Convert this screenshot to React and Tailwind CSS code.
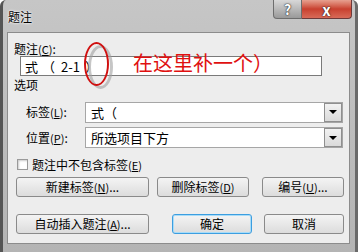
import React from "react";

const F = { fontFamily: '"Noto Sans CJK SC", "DejaVu Sans", sans-serif' };

function M({ k }) {
  return (
    <span className="text-[11px]">
      (<span className="underline">{k}</span>)
    </span>
  );
}

function Btn({ w, children, primary }) {
  return (
    <div
      className={`${w} h-[20px] flex items-center justify-center rounded-[3px] border text-[12px] text-black bg-gradient-to-b from-[#f4f4f4] to-[#dcdcdc] ${
        primary ? "border-[#3c9ee0] shadow-[inset_0_0_0_1px_#a8dcf8]" : "border-[#8a8a8a]"
      }`}
    >
      {children}
    </div>
  );
}

function Select({ text }) {
  return (
    <div className="w-[258px] h-[21px] bg-white border border-[#a6a6a6] flex items-center justify-between pl-[5px] pr-[0px]">
      <span className="text-[13px] leading-none">{text}</span>
      <div className="w-[18px] h-[19px] border border-[#8f8f8f] bg-gradient-to-b from-[#f2f2f2] to-[#dadada] flex items-center justify-center">
        <div className="w-0 h-0 border-l-[4px] border-r-[4px] border-t-[4px] border-l-transparent border-r-transparent border-t-black" />
      </div>
    </div>
  );
}

export default function App() {
  return (
    <div
      className="w-[358px] h-[252px] bg-gradient-to-b from-[#c6c6c6] via-[#bdbdbd] to-[#b4b4b4] relative overflow-hidden border-l-[3px] border-l-[#555] border-r-[3px] border-r-[#6a6a6a] rounded-t-[6px]"
      style={F}
    >
      {/* title bar */}
      <div className="h-[32px] flex items-start">
        <div className="pl-[5px] pt-[10px] text-[12px] leading-[14px] text-black [text-shadow:0_0_3px_#fff,0_0_2px_#fff]">
          题注
        </div>
        <div className="flex-1" />
        <div className="flex mr-[3px]">
          <div className="w-[29px] h-[19px] rounded-bl-[4px] border border-[#6d6d6d] border-t-0 bg-gradient-to-b from-[#d8d8d8] to-[#9a9a9a] flex items-center justify-center text-white font-bold text-[14px] leading-[17px] [text-shadow:0_0_2px_#333,0_0_1px_#000]">
            ?
          </div>
          <div className="w-[50px] h-[19px] rounded-br-[4px] border border-[#6d3a3a] border-t-0 border-l-0 bg-gradient-to-b from-[#e6a090] via-[#c8402f] to-[#d86a58] flex items-center justify-center text-white font-bold text-[15px] leading-[17px] [text-shadow:0_0_2px_#422,0_0_1px_#000]">
            x
          </div>
        </div>
      </div>

      {/* content panel */}
      <div className="relative ml-[4px] mr-[5px] h-[212px] bg-[#ededed] border border-[#8c8c8c] pt-[9px] text-black">
        <div className="h-[14px] ml-[6px] text-[12px] leading-[14px]">
          题注<M k="C" />:
        </div>
        <div className="ml-[12px] w-[302px] h-[20px] bg-white border border-[#7a7a7a] flex items-center pl-[4px] text-[13px] leading-none">
          <span>式</span>
          <span className="ml-[4px]">（</span>
          <span className="ml-[6px]">2-1</span>
          <span className="ml-[5px]">）</span>
        </div>
        <div className="h-[14px] mt-[2px] ml-[6px] text-[12px] leading-[14px]">选项</div>
        <div className="mt-[10px] flex items-center h-[20px]">
          <div className="ml-[18px] w-[59px] text-[12px] leading-[14px]">
            标签<M k="L" />:
          </div>
          <Select text="式（" />
        </div>
        <div className="mt-[5px] flex items-center h-[21px]">
          <div className="ml-[18px] w-[59px] text-[12px] leading-[14px]">
            位置<M k="P" />:
          </div>
          <Select text="所选项目下方" />
        </div>
        <div className="mt-[10px] flex items-center h-[13px] ml-[9px]">
          <div className="w-[11px] h-[11px] bg-white border border-[#9a9a9a] shadow-[inset_1px_1px_2px_#ccc]" />
          <span className="ml-[4px] text-[12px] leading-[14px]">
            题注中不包含标签<M k="E" />
          </span>
        </div>
        <div className="mt-[6px] flex ml-[8px]">
          <Btn w="w-[133px]">
            新建标签<M k="N" />...
          </Btn>
          <div className="w-[8px]" />
          <Btn w="w-[92px]">
            删除标签<M k="D" />
          </Btn>
          <div className="w-[13px]" />
          <Btn w="w-[82px]">
            编号<M k="U" />...
          </Btn>
        </div>
        <div className="mt-[17px] flex ml-[8px]">
          <Btn w="w-[133px]">
            自动插入题注<M k="A" />...
          </Btn>
          <div className="w-[23px]" />
          <Btn w="w-[80px]" primary>
            确定
          </Btn>
          <div className="w-[12px]" />
          <Btn w="w-[80px]">取消</Btn>
        </div>

        {/* annotation overlay */}
        <div className="absolute left-[80px] top-[12px] w-[25px] h-[44px] rounded-[50%] border-[3px] border-[#a0a0a0] opacity-60" />
        <div className="absolute left-[76px] top-[9px] w-[25px] h-[44px] rounded-[50%] border-[2px] border-[#d01010]" />
        <div className="absolute left-[125px] top-[19px] text-[20px] leading-[22px] text-[#e01010]">
          在这里补一个）
        </div>
      </div>
    </div>
  );
}
